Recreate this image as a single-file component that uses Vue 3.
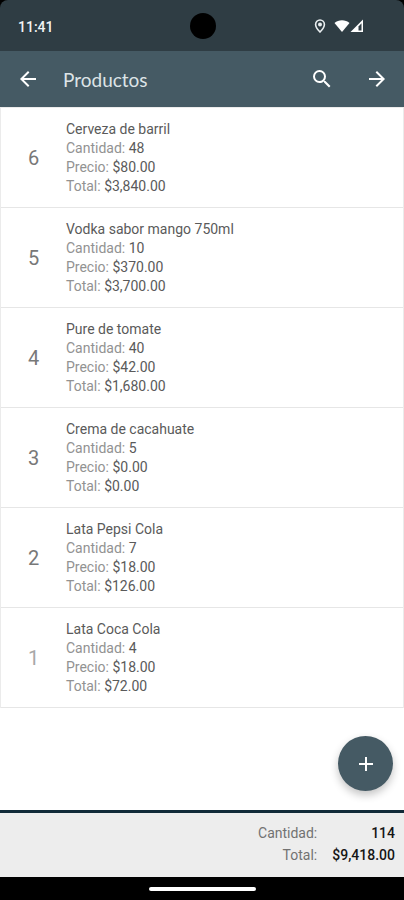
<script setup>
const products = [
  { id: 6, name: 'Cerveza de barril', quantity: '48', price: '$80.00', total: '$3,840.00' },
  { id: 5, name: 'Vodka sabor mango 750ml', quantity: '10', price: '$370.00', total: '$3,700.00' },
  { id: 4, name: 'Pure de tomate', quantity: '40', price: '$42.00', total: '$1,680.00' },
  { id: 3, name: 'Crema de cacahuate', quantity: '5', price: '$0.00', total: '$0.00' },
  { id: 2, name: 'Lata Pepsi Cola', quantity: '7', price: '$18.00', total: '$126.00' },
  { id: 1, name: 'Lata Coca Cola', quantity: '4', price: '$18.00', total: '$72.00' },
]
</script>

<template>
  <div class="screen">
    <div class="status-wrap">
      <div class="status">
        <span class="clock">11:41</span>
        <span class="camera"></span>
        <div class="indicators">
          <svg class="pin" viewBox="0 0 12 14" aria-hidden="true">
            <path d="M6 1a4.400 4.400 0 0 0-4.400 4.400C1.600 8.500 6 13 6 13s4.400-4.500 4.400-7.600A4.400 4.400 0 0 0 6 1z" fill="none" stroke="#e9eef0" stroke-width="1.600" />
            <circle cx="6" cy="5.500" r="2" fill="#e9eef0" />
          </svg>
          <svg class="signals" viewBox="0 0 30 14" aria-hidden="true">
            <path d="M0.500 4C4.500 0.200 11.500 0.200 15.500 4L8 13z" fill="#fff" />
            <path d="M29 0.500V13H16.500z" fill="#fff" />
            <path d="M24.500 7.500l3-3.300v7.300h-3z" fill="#2f3d44" />
          </svg>
        </div>
      </div>
    </div>

    <header class="bar">
      <button class="icon-button" type="button" aria-label="Atrás">
        <svg viewBox="0 0 24 24"><path d="M20 11H7.830l5.590-5.590L12 4l-8 8 8 8 1.410-1.410L7.830 13H20z" /></svg>
      </button>
      <h1>Productos</h1>
      <button class="icon-button" type="button" aria-label="Buscar">
        <svg viewBox="0 0 24 24"><path d="M15.500 14h-.79l-.28-.27A6.471 6.471 0 0 0 16 9.500 6.500 6.500 0 1 0 9.500 16c1.610 0 3.090-.59 4.230-1.570l.27.28v.79l5 4.990L20.490 19zm-6 0a4.500 4.500 0 1 1 0-9 4.500 4.500 0 0 1 0 9z" /></svg>
      </button>
      <button class="icon-button next" type="button" aria-label="Siguiente">
        <svg viewBox="0 0 24 24"><path d="M12 4l-1.410 1.410L16.170 11H4v2h12.170l-5.580 5.590L12 20l8-8z" /></svg>
      </button>
    </header>

    <main>
      <ul class="list">
        <li v-for="p in products" :key="p.id" class="row">
          <span class="number" :class="{ faint: p.id === 1 }">{{ p.id }}</span>
          <div class="details">
            <p class="name">{{ p.name }}</p>
            <p>Cantidad: <span>{{ p.quantity }}</span></p>
            <p>Precio: <span>{{ p.price }}</span></p>
            <p>Total: <span>{{ p.total }}</span></p>
          </div>
        </li>
      </ul>
      <button class="fab" type="button" aria-label="Agregar producto">
        <svg viewBox="0 0 24 24"><path d="M19 13h-6v6h-2v-6H5v-2h6V5h2v6h6z" /></svg>
      </button>
    </main>

    <footer>
      <dl class="summary">
        <dt>Cantidad:</dt>
        <dd>114</dd>
        <dt>Total:</dt>
        <dd>$9,418.00</dd>
      </dl>
      <div class="navigation"><span class="handle"></span></div>
    </footer>
  </div>
</template>

<style>
body {
  margin: 0;
  background: #fff;
}
</style>

<style scoped>
.screen {
  display: flex;
  flex-direction: column;
  min-height: 100vh;
  font-family: Roboto, "Liberation Sans", sans-serif;
  color: #484848;
}

.status-wrap {
  background: #000;
}

.status {
  display: grid;
  grid-template-columns: 1fr auto 1fr;
  align-items: center;
  height: 51px;
  padding: 0 40px 0 18px;
  background: #2f3d44;
  border-radius: 8px 8px 0 0;
  position: relative;
}

.clock {
  font-size: 14px;
  font-weight: 500;
  color: #f1f4f5;
  padding-top: 3px;
}

.camera {
  position: absolute;
  left: 50%;
  top: 13px;
  width: 26px;
  height: 26px;
  margin-left: -12px;
  border-radius: 50%;
  background: #000;
}

.indicators {
  grid-column: 3;
  display: flex;
  justify-content: flex-end;
  align-items: center;
  gap: 8px;
}

.pin {
  width: 12px;
  height: 14px;
}

.signals {
  width: 30px;
  height: 14px;
}

.bar {
  display: flex;
  align-items: center;
  height: 56px;
  padding: 0 15px 0 16px;
  background: #455a64;
}

h1 {
  flex: 1;
  margin: 0;
  padding-left: 23px;
  font-family: Lato, Roboto, sans-serif;
  font-size: 19px;
  font-weight: 400;
  color: #dde4e7;
}

.icon-button {
  display: flex;
  padding: 0;
  border: 0;
  background: none;
  cursor: pointer;
}

.icon-button svg,
.fab svg {
  width: 24px;
  height: 24px;
  fill: #fff;
}

.next {
  margin-left: 31px;
}

main {
  flex: 1;
  position: relative;
}

.list {
  margin: 0;
  padding: 0;
  list-style: none;
  border: 1px solid #ebebeb;
  border-bottom: 0;
}

.row {
  display: flex;
  align-items: center;
  padding: 12px 0 11px;
  border-bottom: 1px solid #e6e6e6;
}

.number {
  width: 65px;
  text-align: center;
  font-size: 20px;
  color: #787878;
}

.faint {
  color: #a8a8a8;
}

.details {
  flex: 1;
}

.details p {
  margin: 0;
  font-size: 14px;
  line-height: 19px;
  color: #929292;
}

.details span,
.details .name {
  color: #5a5a5a;
}

.fab {
  position: absolute;
  right: 11px;
  bottom: 19px;
  display: flex;
  align-items: center;
  justify-content: center;
  width: 55px;
  height: 55px;
  padding: 0;
  border: 0;
  border-radius: 50%;
  background: #455a64;
  box-shadow: 0 4px 8px rgba(0, 0, 0, 0.24);
  cursor: pointer;
}

.summary {
  display: grid;
  grid-template-columns: 1fr auto;
  column-gap: 15px;
  margin: 0;
  padding: 9px 9px 11px;
  border-top: 3px solid #102a38;
  background: #ededed;
  font-size: 14px;
  line-height: 22px;
  text-align: right;
}

.summary dt {
  color: #727272;
}

.summary dd {
  margin: 0;
  font-weight: 500;
  color: #151515;
}

.navigation {
  display: flex;
  align-items: center;
  justify-content: center;
  height: 23px;
  background: #000;
}

.handle {
  width: 107px;
  height: 4px;
  border-radius: 2px;
  background: #fff;
}
</style>
